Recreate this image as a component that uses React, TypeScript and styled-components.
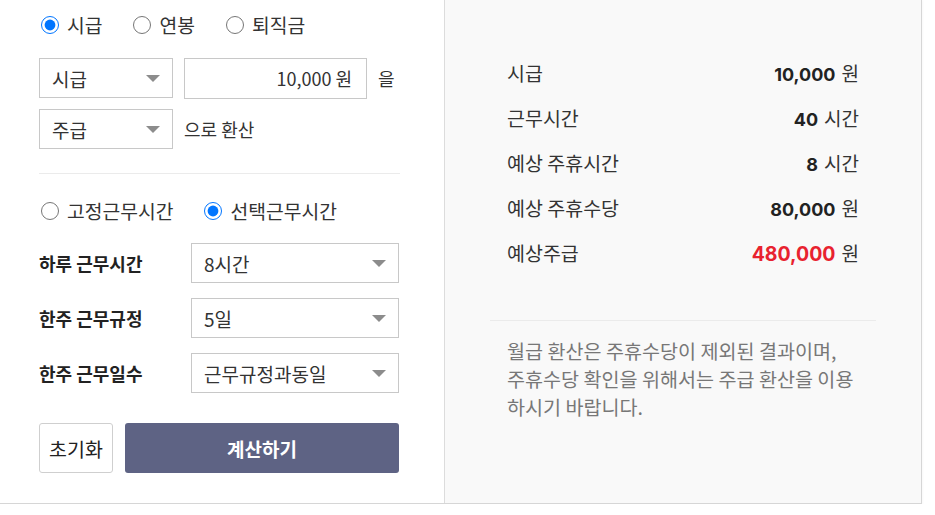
import React from "react";
import styled, { createGlobalStyle } from "styled-components";

const Global = createGlobalStyle`
  html, body { margin: 0; padding: 0; background: #fff; }
  body { font-family: "Noto Sans CJK KR", "Noto Sans", sans-serif; color: #333; }
  * { box-sizing: border-box; }
`;

const Card = styled.div`
  display: flex;
  width: 923px;
  margin: -1px 0 0 -1px;
  border: 1px solid #d6d6d6;
  box-shadow: 0 1px 3px rgba(0, 0, 0, 0.06);
  background: #fff;
`;

const LeftPanel = styled.div`
  width: 445px;
  flex: none;
  border-right: 1px solid #dcdcdc;
  padding: 16px 45px 30px 39px;
  display: flex;
  flex-direction: column;
`;

const RightPanel = styled.div`
  flex: 1;
  background: #f9f9f9;
  padding: 50px 45px 0;
`;

const RadioGroup = styled.div<{ $mt?: number }>`
  display: flex;
  align-items: center;
  height: 18px;
  margin-top: ${(p) => p.$mt ?? 0}px;
`;

const RadioLabel = styled.label`
  display: inline-flex;
  align-items: center;
  gap: 8px;
  margin-right: 29px;
  font-size: 19.3px;
  line-height: 18px;
  white-space: nowrap;
  color: #333;
  cursor: pointer;
`;

const RadioInput = styled.input`
  width: 18px;
  height: 18px;
  margin: 0 0 0 2px;
  accent-color: #0075ff;
`;

const ConvertRow = styled.div<{ $mt: number }>`
  display: flex;
  align-items: center;
  gap: 11px;
  height: 40px;
  margin-top: ${(p) => p.$mt}px;
  font-size: 18px;
  color: #333;
`;

const SelectBox = styled.div<{ $w: number }>`
  width: ${(p) => p.$w}px;
  height: 40px;
  flex: none;
  border: 1px solid #c8c8c8;
  background: #fff;
  padding: 0 12px 0 12px;
  display: flex;
  align-items: center;
  justify-content: space-between;
  font-size: 19px;
  color: #333;
`;

const Arrow = styled.span`
  width: 0;
  height: 0;
  border-left: 7px solid transparent;
  border-right: 7px solid transparent;
  border-top: 7px solid #8c8c8c;
`;

const AmountBox = styled.div`
  width: 183px;
  height: 41px;
  flex: none;
  border: 1px solid #c8c8c8;
  background: #fff;
  padding: 0 14px;
  display: flex;
  align-items: center;
  justify-content: flex-end;
  font-size: 18px;
  color: #333;
`;

const Divider = styled.div<{ $mt: number; $w?: string }>`
  height: 1px;
  background: #ebebeb;
  margin-top: ${(p) => p.$mt}px;
  width: ${(p) => p.$w ?? "100%"};
`;

const FieldRow = styled.div<{ $mt: number }>`
  display: flex;
  align-items: center;
  margin-top: ${(p) => p.$mt}px;
`;

const FieldLabel = styled.div`
  width: 152px;
  flex: none;
  font-size: 18px;
  font-weight: 700;
  color: #222;
`;

const ButtonRow = styled.div`
  display: flex;
  gap: 12px;
  margin-top: 30px;
  height: 50px;
`;

const ResetButton = styled.button`
  width: 74px;
  height: 50px;
  border: 1px solid #cfcfcf;
  border-radius: 3px;
  background: #fff;
  font-family: inherit;
  font-size: 19.5px;
  color: #222;
  padding: 0;
`;

const CalcButton = styled.button`
  flex: 1;
  height: 50px;
  border: none;
  border-radius: 3px;
  background: #5e6384;
  color: #fff;
  font-family: inherit;
  font-size: 19px;
  font-weight: 700;
  padding: 0;
`;

const ResultRow = styled.div`
  height: 45px;
  padding: 0 17px;
  display: flex;
  align-items: center;
  justify-content: space-between;
  font-size: 19.5px;
  color: #333;
`;

const Value = styled.div`
  display: flex;
  align-items: baseline;
  gap: 6px;
  font-size: 19px;
  color: #333;
`;

const Num = styled.span<{ $accent?: boolean }>`
  font-family: Inter, "Noto Sans", sans-serif;
  font-weight: 700;
  font-size: ${(p) => (p.$accent ? 19.5 : 18)}px;
  color: ${(p) => (p.$accent ? "#e8222f" : "#222")};
`;

const Note = styled.p`
  margin: 16px 0 0;
  padding: 0 17px;
  font-size: 19.6px;
  line-height: 28px;
  white-space: nowrap;
  color: #777;
`;

const results = [
  { label: "시급", num: "10,000", unit: "원" },
  { label: "근무시간", num: "40", unit: "시간" },
  { label: "예상 주휴시간", num: "8", unit: "시간" },
  { label: "예상 주휴수당", num: "80,000", unit: "원" },
  { label: "예상주급", num: "480,000", unit: "원", accent: true },
];

const fields = [
  { label: "하루 근무시간", value: "8시간" },
  { label: "한주 근무규정", value: "5일" },
  { label: "한주 근무일수", value: "근무규정과동일" },
];

export default function App() {
  return (
    <>
      <Global />
      <Card>
        <LeftPanel>
          <RadioGroup>
            <RadioLabel>
              <RadioInput type="radio" name="kind" defaultChecked />
              시급
            </RadioLabel>
            <RadioLabel>
              <RadioInput type="radio" name="kind" />
              연봉
            </RadioLabel>
            <RadioLabel>
              <RadioInput type="radio" name="kind" />
              퇴직금
            </RadioLabel>
          </RadioGroup>

          <ConvertRow $mt={24}>
            <SelectBox $w={134}>
              시급
              <Arrow />
            </SelectBox>
            <AmountBox>10,000 원</AmountBox>
            <span>을</span>
          </ConvertRow>
          <ConvertRow $mt={11}>
            <SelectBox $w={134}>
              주급
              <Arrow />
            </SelectBox>
            <span>으로 환산</span>
          </ConvertRow>

          <Divider $mt={24} $w="361px" />

          <RadioGroup $mt={28}>
            <RadioLabel>
              <RadioInput type="radio" name="mode" />
              고정근무시간
            </RadioLabel>
            <RadioLabel>
              <RadioInput type="radio" name="mode" defaultChecked />
              선택근무시간
            </RadioLabel>
          </RadioGroup>

          {fields.map((f, i) => (
            <FieldRow key={f.label} $mt={i === 0 ? 23 : 15}>
              <FieldLabel>{f.label}</FieldLabel>
              <SelectBox $w={208}>
                {f.value}
                <Arrow />
              </SelectBox>
            </FieldRow>
          ))}

          <ButtonRow>
            <ResetButton>초기화</ResetButton>
            <CalcButton>계산하기</CalcButton>
          </ButtonRow>
        </LeftPanel>

        <RightPanel>
          {results.map((r) => (
            <ResultRow key={r.label}>
              <span>{r.label}</span>
              <Value>
                <Num $accent={r.accent}>{r.num}</Num>
                {r.unit}
              </Value>
            </ResultRow>
          ))}
          <Divider $mt={45} />
          <Note>
            월급 환산은 주휴수당이 제외된 결과이며,
            <br />
            주휴수당 확인을 위해서는 주급 환산을 이용
            <br />
            하시기 바랍니다.
          </Note>
        </RightPanel>
      </Card>
    </>
  );
}
